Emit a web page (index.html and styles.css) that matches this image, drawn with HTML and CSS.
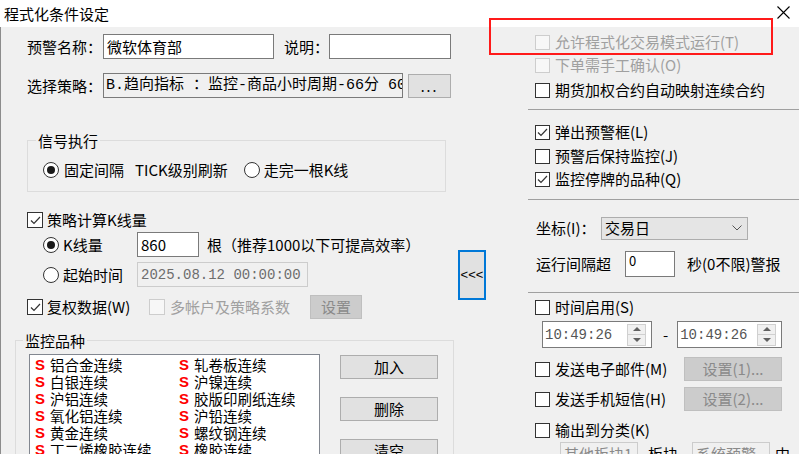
FILE: index.html
```html
<!DOCTYPE html>
<html lang="zh-CN">

<head>
  <meta charset="utf-8">
  <title>程式化条件设定</title>
  <link rel="stylesheet" href="styles.css">
</head>

<body>
  <div class="window">
    <div class="titlebar">
      <span class="title">程式化条件设定</span>
      <svg class="close" width="13" height="13" viewBox="0 0 13 13">
        <path d="M0.5 0.5L12.5 12.5M12.5 0.5L0.5 12.5" stroke="#000" stroke-width="1.1" />
      </svg>
    </div>

    <div class="main">
      <!-- left side: name, strategy, options, list -->
      <div class="left">
        <div class="row r-name">
          <span class="lbl name-lbl">预警名称：</span>
          <span class="edit name">微软体育部</span>
          <span class="lbl desc-lbl">说明：</span>
          <span class="edit desc"></span>
        </div>
        <div class="row r-strategy">
          <span class="lbl name-lbl">选择策略：</span>
          <span class="edit strategy">B.趋向指标 ：监控-商品小时周期-66分 60;</span>
          <span class="btn dots">...</span>
        </div>

        <div class="group signal">
          <span class="legend">信号执行</span>
          <span class="radio on"></span><span class="txt">固定间隔</span><span class="txt tick">TICK级别刷新</span>
          <span class="radio second"></span><span class="txt">走完一根K线</span>
        </div>

        <div class="row r-calc">
          <span class="cb checked"><svg width="13" height="13" viewBox="0 0 13 13"><path d="M2 6.5L5 9.5L11 3" fill="none" stroke="#333" stroke-width="1.2"/></svg></span>
          <span class="txt">策略计算K线量</span>
        </div>
        <div class="row r-count">
          <span class="radio on"></span><span class="txt klbl">K线量</span>
          <span class="edit num">860</span>
          <span class="txt hint">根（推荐1000以下可提高效率）</span>
        </div>
        <div class="row r-start">
          <span class="radio"></span><span class="txt klbl">起始时间</span>
          <span class="edit date">2025.08.12 00:00:00</span>
        </div>
        <div class="row r-adjust">
          <span class="cb checked"><svg width="13" height="13" viewBox="0 0 13 13"><path d="M2 6.5L5 9.5L11 3" fill="none" stroke="#333" stroke-width="1.2"/></svg></span>
          <span class="txt adj-lbl">复权数据(W)</span>
          <span class="cb dis"></span>
          <span class="txt dis-txt multi-lbl">多帐户及策略系数</span>
          <span class="btn btn-dis set">设置</span>
        </div>

        <div class="group watch">
          <span class="legend">监控品种</span>
          <div class="list">
            <div class="item"><b>S</b>铝合金连续</div>
            <div class="item"><b>S</b>轧卷板连续</div>
            <div class="item"><b>S</b>白银连续</div>
            <div class="item"><b>S</b>沪镍连续</div>
            <div class="item"><b>S</b>沪铝连续</div>
            <div class="item"><b>S</b>胶版印刷纸连续</div>
            <div class="item"><b>S</b>氧化铝连续</div>
            <div class="item"><b>S</b>沪铅连续</div>
            <div class="item"><b>S</b>黄金连续</div>
            <div class="item"><b>S</b>螺纹钢连续</div>
            <div class="item"><b>S</b>丁二烯橡胶连续</div>
            <div class="item"><b>S</b>橡胶连续</div>
          </div>
          <div class="list-btns">
            <span class="btn wide">加入</span>
            <span class="btn wide">删除</span>
            <span class="btn wide">清空</span>
          </div>
        </div>
      </div>

      <div class="mid">
        <span class="collapse">&lt;&lt;&lt;</span>
      </div>

      <!-- right side: switches and notifications -->
      <div class="right">
        <div class="crow c1"><span class="cb dis"></span><span class="txt dis-txt">允许程式化交易模式运行(T)</span></div>
        <div class="crow c2"><span class="cb dis"></span><span class="txt dis-txt">下单需手工确认(O)</span></div>
        <div class="crow c3"><span class="cb"></span><span class="txt">期货加权合约自动映射连续合约</span></div>
        <div class="sep s1"></div>
        <div class="crow c4"><span class="cb checked"><svg width="13" height="13" viewBox="0 0 13 13"><path d="M2 6.5L5 9.5L11 3" fill="none" stroke="#333" stroke-width="1.2"/></svg></span><span class="txt">弹出预警框(L)</span></div>
        <div class="crow c5"><span class="cb"></span><span class="txt">预警后保持监控(J)</span></div>
        <div class="crow c6"><span class="cb checked"><svg width="13" height="13" viewBox="0 0 13 13"><path d="M2 6.5L5 9.5L11 3" fill="none" stroke="#333" stroke-width="1.2"/></svg></span><span class="txt">监控停牌的品种(Q)</span></div>
        <div class="sep s2"></div>

        <div class="row r-axis">
          <span class="txt axis-lbl">坐标(I)：</span>
          <span class="combo">交易日<svg width="10" height="6" viewBox="0 0 10 6"><path d="M0.5 0.5L5 5L9.5 0.5" fill="none" stroke="#555" stroke-width="1"/></svg></span>
        </div>
        <div class="row r-interval">
          <span class="txt int-lbl">运行间隔超</span>
          <span class="edit sec">0</span>
          <span class="txt sec-lbl">秒(0不限)警报</span>
        </div>
        <div class="sep s3"></div>

        <div class="crow c7"><span class="cb"></span><span class="txt">时间启用(S)</span></div>
        <div class="row r-time">
          <span class="spin t1"><span class="time">10:49:26</span><span class="arrows"><i class="up"></i><i class="down"></i></span></span>
          <span class="dash">-</span>
          <span class="spin t2"><span class="time">10:49:26</span><span class="arrows"><i class="up"></i><i class="down"></i></span></span>
        </div>
        <div class="crow c8"><span class="cb"></span><span class="txt send-lbl">发送电子邮件(M)</span><span class="btn btn-dis cfg">设置(1)...</span></div>
        <div class="crow c9"><span class="cb"></span><span class="txt send-lbl">发送手机短信(H)</span><span class="btn btn-dis cfg">设置(2)...</span></div>
        <div class="crow c10"><span class="cb"></span><span class="txt">输出到分类(K)</span></div>
        <div class="row r-block">
          <span class="edit blk">其他板块1</span>
          <span class="txt blk-lbl">板块</span>
          <span class="edit blk">系统预警</span>
          <span class="txt mid-lbl">中</span>
        </div>
      </div>
    </div>

    <div class="highlight"></div>
  </div>
</body>

</html>
```

FILE: styles.css
```css
body {
  margin: 0;
  font-family: "Noto Sans CJK SC", sans-serif;
  font-size: 15px;
  line-height: 18px;
  color: #000;
}

.window {
  position: relative;
  width: 799px;
  height: 454px;
  overflow: hidden;
  background: #f0f0f0;
}

.titlebar {
  height: 27px;
  background: #fff;
  display: flex;
  align-items: center;
  justify-content: space-between;
  padding: 0 9px 0 4px;
}

.close {
  margin-top: -2px;
}

.main {
  display: flex;
  height: 427px;
  box-shadow: inset 1px 0 #8c8c8c;
}

.left {
  width: 456px;
  flex-shrink: 0;
}

.row {
  display: flex;
  align-items: center;
}

.txt {
  white-space: nowrap;
}

.dis-txt {
  color: #a0a0a0;
}

/* inputs and buttons */

.edit {
  box-sizing: border-box;
  display: flex;
  align-items: center;
  height: 25px;
  border: 1px solid #7a7a7a;
  background: #fff;
  padding-left: 3px;
  white-space: nowrap;
  overflow: hidden;
}

.btn {
  box-sizing: border-box;
  display: flex;
  align-items: center;
  justify-content: center;
  height: 24px;
  border: 1px solid #adadad;
  background: #e1e1e1;
}

.btn-dis {
  background: #cccccc;
  border-color: #bfbfbf;
  color: #8a8a8a;
}

.cb {
  box-sizing: border-box;
  display: inline-flex;
  align-items: center;
  justify-content: center;
  width: 15px;
  height: 15px;
  border: 1px solid #333;
  background: #fff;
  flex-shrink: 0;
}

.cb.dis {
  border-color: #cdcdcd;
  background: #f7f7f7;
}

.radio {
  box-sizing: border-box;
  display: inline-flex;
  align-items: center;
  justify-content: center;
  width: 16px;
  height: 16px;
  border: 1px solid #333;
  border-radius: 50%;
  background: #fff;
  flex-shrink: 0;
}

.radio.on::after {
  content: "";
  width: 8px;
  height: 8px;
  border-radius: 50%;
  background: #1a1a1a;
}

/* group boxes */

.group {
  position: relative;
  box-sizing: border-box;
  border: 1px solid #dcdcdc;
}

.legend {
  position: absolute;
  top: -9px;
  padding: 0 2px;
  background: #f0f0f0;
}

/* left rows */

.r-name {
  margin-top: 7px;
  height: 25px;
  padding-left: 27px;
}

.name-lbl {
  width: 76px;
}

.name {
  width: 171px;
}

.desc-lbl {
  margin-left: 10px;
  width: 45px;
}

.desc {
  width: 122px;
}

.r-strategy {
  margin-top: 14px;
  height: 25px;
  padding-left: 27px;
}

.strategy {
  width: 300px;
  background: #f0f0f0;
  padding-left: 2px;
  font-family: "Liberation Mono", "Noto Sans CJK SC", monospace;
}

.dots {
  width: 43px;
  margin-left: 5px;
  font-size: 14px;
  letter-spacing: 2px;
}

.signal {
  margin: 42px 0 0 27px;
  width: 419px;
  height: 52px;
  display: flex;
  align-items: center;
  padding: 8px 0 0 15px;
}

.signal .legend {
  left: 8px;
}

.signal .radio {
  margin-right: 5px;
}

.signal .tick {
  margin-left: 11px;
}

.signal .second {
  margin-left: 16px;
  margin-right: 4px;
}

.r-calc {
  margin-top: 19px;
  height: 18px;
  padding-left: 27px;
}

.r-calc .cb {
  width: 16px;
  height: 16px;
  margin-right: 4px;
}

.r-count {
  margin-top: 3px;
  height: 25px;
  padding-left: 43px;
}

.klbl {
  width: 74px;
  margin-left: 4px;
}

.num {
  width: 62px;
  padding-left: 3px;
}

.hint {
  margin-left: 8px;
}

.r-start {
  margin-top: 5px;
  height: 25px;
  padding-left: 43px;
}

.date {
  width: 171px;
  border-color: #cccccc;
  background: #f0f0f0;
  color: #6d6d6d;
  font-family: "Liberation Mono", monospace;
  font-size: 14px;
}

.r-adjust {
  margin-top: 8px;
  height: 24px;
  padding-left: 27px;
}

.r-adjust .cb {
  width: 16px;
  height: 16px;
}

.adj-lbl {
  width: 102px;
  margin-left: 4px;
}

.multi-lbl {
  width: 140px;
  margin-left: 5px;
}

.set {
  width: 52px;
}

/* watch list */

.watch {
  margin: 21px 0 0 15px;
  width: 439px;
  height: 160px;
  display: flex;
  align-items: flex-start;
  padding: 13px 0 0 13px;
}

.watch .legend {
  left: 7px;
}

.list {
  box-sizing: border-box;
  width: 291px;
  height: 140px;
  border: 1px solid #828790;
  background: #fff;
  padding: 1px 0 0 5px;
  display: grid;
  grid-template-columns: 144px 1fr;
  grid-auto-rows: 17px;
  align-content: start;
}

.item {
  display: flex;
  align-items: center;
  white-space: nowrap;
  font-size: 14.5px;
  line-height: 17px;
}

.item b {
  width: 15px;
  color: #ff0000;
  font-family: "Liberation Sans", sans-serif;
  font-size: 15px;
}

.list-btns {
  display: flex;
  flex-direction: column;
  margin: 1px 0 0 20px;
  gap: 18px;
}

.wide {
  width: 98px;
  height: 24px;
}

/* collapse button */

.mid {
  width: 72px;
  flex-shrink: 0;
}

.collapse {
  box-sizing: border-box;
  display: flex;
  align-items: center;
  justify-content: center;
  width: 28px;
  height: 50px;
  margin: 223px 0 0 2px;
  border: 2px solid #0078d7;
  background: #e1e1e1;
  font-family: "Liberation Sans", sans-serif;
  font-size: 13px;
}

/* right side */

.right {
  flex: 1;
}

.crow {
  display: flex;
  align-items: center;
  height: 22px;
  padding-left: 7px;
}

.crow .cb {
  margin-right: 5px;
}

.c1 {
  margin-top: 4px;
}

.c2 {
  margin-top: 1px;
}

.c3 {
  margin-top: 3px;
}

.sep {
  height: 1px;
  background: #a0a0a0;
}

.s1 {
  margin-top: 8px;
}

.c4 {
  margin-top: 11px;
}

.c5 {
  margin-top: 2px;
}

.c6 {
  margin-top: 1px;
}

.s2 {
  margin-top: 9px;
}

.r-axis {
  margin-top: 17px;
  height: 22px;
  padding-left: 8px;
}

.axis-lbl {
  width: 65px;
}

.combo {
  box-sizing: border-box;
  display: flex;
  align-items: center;
  justify-content: space-between;
  width: 147px;
  height: 23px;
  border: 1px solid #adadad;
  background: #e5e5e5;
  padding: 0 5px 0 3px;
}

.r-interval {
  margin-top: 12px;
  height: 26px;
  padding-left: 8px;
}

.int-lbl {
  width: 89px;
}

.sec {
  width: 50px;
  height: 26px;
  align-items: flex-start;
  font-size: 13px;
  line-height: 15px;
  padding-top: 1px;
}

.sec-lbl {
  margin-left: 12px;
}

.s3 {
  margin-top: 15px;
}

.c7 {
  margin-top: 3px;
}

.r-time {
  margin-top: 3px;
  height: 27px;
  padding-left: 14px;
}

.spin {
  box-sizing: border-box;
  display: flex;
  align-items: center;
  justify-content: space-between;
  height: 27px;
  border: 1px solid #7a7a7a;
  background: #fff;
  padding: 0 5px 0 2px;
}

.t1 {
  width: 110px;
}

.t2 {
  width: 105px;
}

.time {
  font-family: "Liberation Mono", monospace;
  font-size: 14px;
  color: #555;
}

.arrows {
  display: flex;
  flex-direction: column;
  width: 19px;
  height: 22px;
  border: 1px solid #d0d0d0;
  box-sizing: border-box;
}

.arrows i {
  flex: 1;
  display: flex;
  align-items: center;
  justify-content: center;
  background: #f0f0f0;
}

.arrows i + i {
  border-top: 1px solid #d0d0d0;
}

.arrows .up::after {
  content: "";
  border-left: 4px solid transparent;
  border-right: 4px solid transparent;
  border-bottom: 4px solid #606060;
}

.arrows .down::after {
  content: "";
  border-left: 4px solid transparent;
  border-right: 4px solid transparent;
  border-top: 4px solid #606060;
}

.dash {
  margin: 0 9px 0 11px;
}

.c8 {
  margin-top: 9px;
  height: 24px;
}

.c9 {
  margin-top: 6px;
  height: 24px;
}

.send-lbl {
  width: 129px;
}

.cfg {
  width: 98px;
}

.c10 {
  margin-top: 8px;
}

.r-block {
  margin-top: 1px;
  height: 24px;
  padding-left: 32px;
}

.blk {
  width: 78px;
  height: 24px;
  border-color: #cccccc;
  background: #f0f0f0;
  color: #8a8a8a;
}

.blk-lbl {
  margin: 0 14px 0 10px;
}

.mid-lbl {
  margin-left: 5px;
}

/* red annotation frame */

.highlight {
  position: absolute;
  left: 489px;
  top: 18px;
  width: 284px;
  height: 37px;
  box-sizing: border-box;
  border: 2px solid #ff1a1a;
}
```
